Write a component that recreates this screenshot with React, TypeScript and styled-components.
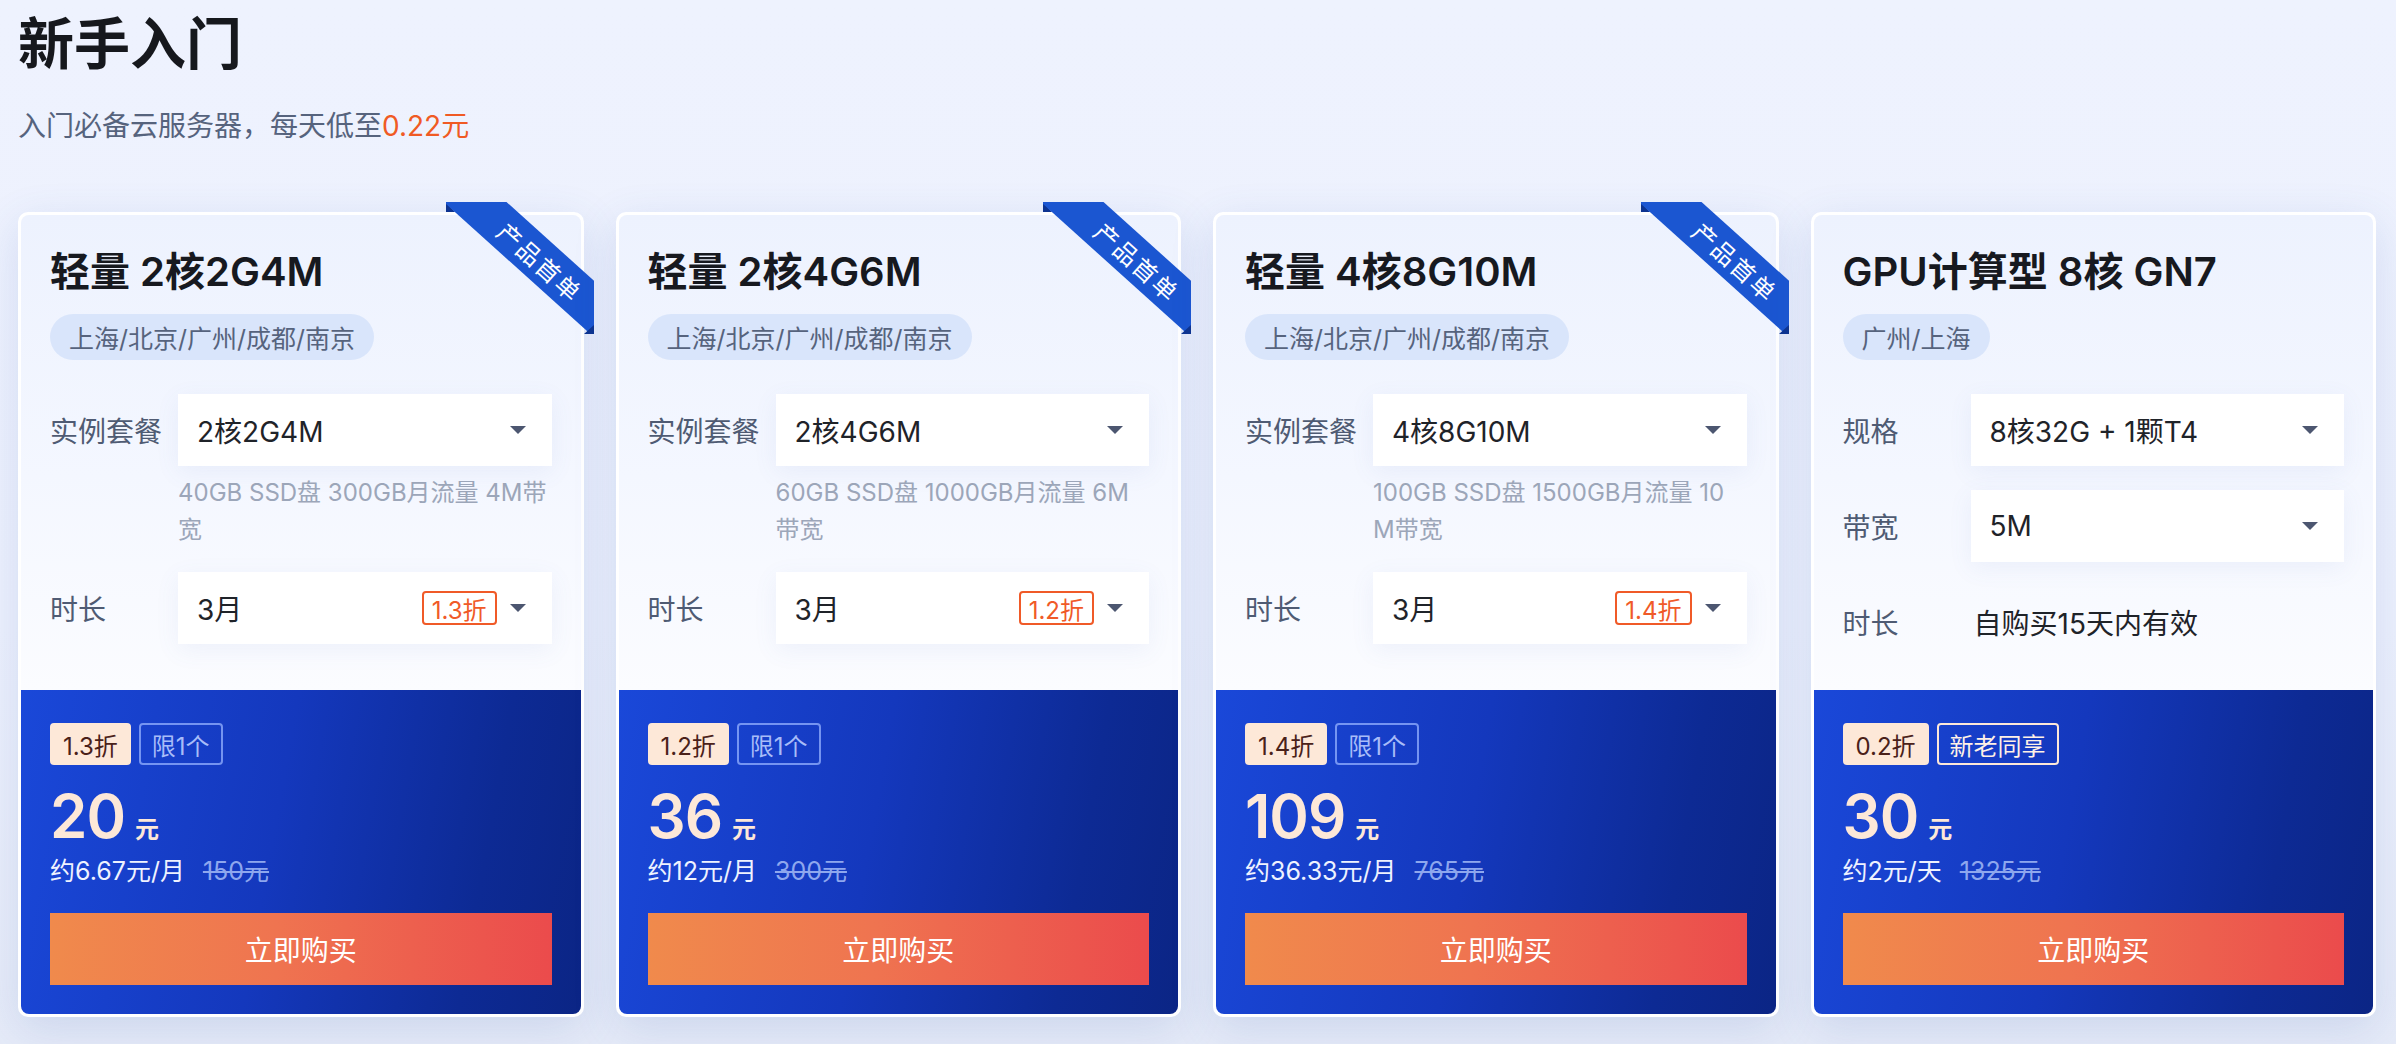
import styled, { createGlobalStyle } from 'styled-components'

// DATA

interface Row {
	label: string
	value?: string
	discount?: string
	desc?: string[]
	text?: string
}

interface Plan {
	title: string
	regions: string
	ribbon: boolean
	rows: Row[]
	tag: string
	limit: string
	limitHot?: boolean
	price: string
	per: string
	orig: string
}

const plans: Plan[] = [
	{
		title: '轻量 2核2G4M',
		regions: '上海/北京/广州/成都/南京',
		ribbon: true,
		rows: [
			{ label: '实例套餐', value: '2核2G4M', desc: ['40GB SSD盘 300GB月流量 4M带', '宽'] },
			{ label: '时长', value: '3月', discount: '1.3折' },
		],
		tag: '1.3折',
		limit: '限1个',
		price: '20',
		per: '约6.67元/月',
		orig: '150元',
	},
	{
		title: '轻量 2核4G6M',
		regions: '上海/北京/广州/成都/南京',
		ribbon: true,
		rows: [
			{ label: '实例套餐', value: '2核4G6M', desc: ['60GB SSD盘 1000GB月流量 6M', '带宽'] },
			{ label: '时长', value: '3月', discount: '1.2折' },
		],
		tag: '1.2折',
		limit: '限1个',
		price: '36',
		per: '约12元/月',
		orig: '300元',
	},
	{
		title: '轻量 4核8G10M',
		regions: '上海/北京/广州/成都/南京',
		ribbon: true,
		rows: [
			{ label: '实例套餐', value: '4核8G10M', desc: ['100GB SSD盘 1500GB月流量 10', 'M带宽'] },
			{ label: '时长', value: '3月', discount: '1.4折' },
		],
		tag: '1.4折',
		limit: '限1个',
		price: '109',
		per: '约36.33元/月',
		orig: '765元',
	},
	{
		title: 'GPU计算型 8核 GN7',
		regions: '广州/上海',
		ribbon: false,
		rows: [
			{ label: '规格', value: '8核32G + 1颗T4' },
			{ label: '带宽', value: '5M' },
			{ label: '时长', text: '自购买15天内有效' },
		],
		tag: '0.2折',
		limit: '新老同享',
		limitHot: true,
		price: '30',
		per: '约2元/天',
		orig: '1325元',
	},
]

// CSS

const GlobalStyle = createGlobalStyle`
	* {
		box-sizing: border-box;
	}

	body {
		margin: 0;
		background: linear-gradient(180deg, #eef2fe 0%, #edf1fd 60%, #e6ebf8 100%);
		font-family: Inter, "Noto Sans CJK SC", sans-serif;
		color: #1b1f2a;
	}
`

const Page = styled.div`
	width: 2396px;
	height: 1044px;
	padding: 8px 20px 0 18px;
	overflow: hidden;
`

const Heading = styled.h1`
	margin: 0;
	font-size: 56px;
	line-height: 72px;
	font-weight: 700;
	color: #16181d;
`

const Subtitle = styled.p`
	margin: 26px 0 0;
	font-size: 28px;
	line-height: 40px;
	color: #56637d;

	em {
		font-style: normal;
		color: #f05a24;
	}
`

const Grid = styled.div`
	margin-top: 66px;
	display: grid;
	grid-template-columns: repeat(4, 1fr);
	gap: 32px;
	align-items: stretch;
`

const Card = styled.div`
	position: relative;
	display: flex;
	flex-direction: column;
	border: 3px solid #ffffff;
	border-radius: 10px;
	box-shadow: 0 12px 44px rgba(64, 100, 180, 0.16);
	background: #ffffff;
`

const Top = styled.div`
	flex: 1;
	padding: 29px 29px 32px;
	border-radius: 8px 8px 0 0;
	background: linear-gradient(180deg, #edf2fe 0%, #f4f7ff 55%, #fbfcff 100%);
`

const Title = styled.h2`
	margin: 0;
	font-size: 40px;
	line-height: 56px;
	font-weight: 600;
	color: #17191f;
`

const Regions = styled.span`
	display: inline-flex;
	align-items: center;
	height: 46px;
	margin-top: 14px;
	padding: 0 19px;
	border-radius: 23px;
	background: #d9e5fb;
	font-size: 25px;
	color: #56637d;
`

const Rows = styled.div`
	margin-top: 34px;
	display: flex;
	flex-direction: column;
	gap: 24px;
`

const RowLine = styled.div`
	display: grid;
	grid-template-columns: 128px 1fr;
	align-items: start;
`

const Label = styled.div`
	height: 72px;
	display: flex;
	align-items: center;
	font-size: 28px;
	color: #4f5b73;
`

const Select = styled.div`
	height: 72px;
	display: flex;
	align-items: center;
	padding: 0 26px 0 19px;
	background: #ffffff;
	box-shadow: 0 6px 24px rgba(90, 120, 190, 0.08);
	font-size: 28px;
	color: #1f2329;

	span {
		flex: 1;
	}
`

const Arrow = styled.i`
	width: 0;
	height: 0;
	border-left: 8px solid transparent;
	border-right: 8px solid transparent;
	border-top: 8px solid #4c5670;
`

const Discount = styled.b`
	height: 34px;
	margin-right: 13px;
	padding: 0 8px;
	display: flex;
	align-items: center;
	border: 2px solid #f05a28;
	border-radius: 4px;
	font-size: 24px;
	font-weight: 400;
	color: #f05a28;
`

const Desc = styled.p`
	margin: 8px 0 0;
	font-size: 24px;
	line-height: 37px;
	color: #9ca6b9;

	span {
		display: block;
		white-space: nowrap;
	}
`

const PlainValue = styled.div`
	height: 72px;
	display: flex;
	align-items: center;
	padding-left: 3px;
	font-size: 28px;
	color: #1f2329;
`

const Bottom = styled.div`
	padding: 33px 29px 29px;
	border-radius: 0 0 8px 8px;
	background: linear-gradient(100deg, #1a48d9 0%, #1438bd 45%, #0d2a94 80%, #0b2585 100%);
`

const Tags = styled.div`
	display: flex;
	gap: 8px;
`

const Tag = styled.span<{ $outline?: boolean; $hot?: boolean }>`
	height: 42px;
	padding: 0 11px;
	display: flex;
	align-items: center;
	border-radius: 4px;
	font-size: 24px;
	border: 2px solid
		${(p) => (p.$outline ? (p.$hot ? '#fde8d8' : 'rgba(150, 178, 255, 0.75)') : '#fde8d8')};
	background: ${(p) => (p.$outline ? 'transparent' : '#fde8d8')};
	color: ${(p) => (p.$outline ? (p.$hot ? '#fff1e6' : '#a8bcf8') : '#4a2119')};
`

const Price = styled.div`
	margin-top: 16px;
	height: 70px;
	display: flex;
	align-items: baseline;
	color: #fde8d8;

	strong {
		font-size: 60px;
		line-height: 70px;
		font-weight: 600;
		letter-spacing: -1px;
	}

	small {
		margin-left: 10px;
		font-size: 24px;
		font-weight: 700;
	}
`

const Per = styled.div`
	height: 36px;
	display: flex;
	align-items: center;
	gap: 18px;
	font-size: 25px;
	color: #eef2ff;

	s {
		color: #8ea7ee;
	}
`

const BuyButton = styled.button`
	margin-top: 26px;
	width: 100%;
	height: 72px;
	border: none;
	background: linear-gradient(90deg, #f08a4c 0%, #ef7450 45%, #eb4b4c 100%);
	font-family: inherit;
	font-size: 28px;
	color: #ffffff;
	cursor: pointer;
`

const Ribbon = styled.div`
	position: absolute;
	top: -13px;
	right: -13px;
	width: 148px;
	height: 132px;
	overflow: hidden;
	pointer-events: none;

	&::before,
	&::after {
		content: '';
		position: absolute;
		width: 0;
		height: 0;
	}

	&::before {
		left: 0;
		top: 0;
		border-left: 9px solid #0d3390;
		border-top: 10px solid transparent;
	}

	&::after {
		right: 0;
		bottom: 0;
		border-right: 10px solid #0d3390;
		border-top: 9px solid transparent;
	}
`

const Band = styled.div`
	position: absolute;
	left: -32px;
	top: 32px;
	width: 240px;
	height: 42px;
	padding-left: 18px;
	display: flex;
	align-items: center;
	justify-content: center;
	background: #1b56d1;
	transform: rotate(42deg);
	font-size: 24px;
	letter-spacing: 2px;
	color: #ffffff;
`

// COMPONENT

const PlanCard: React.FC<{ plan: Plan }> = ({ plan }) => (
	<Card>
		{plan.ribbon && (
			<Ribbon>
				<Band>产品首单</Band>
			</Ribbon>
		)}
		<Top>
			<Title>{plan.title}</Title>
			<Regions>{plan.regions}</Regions>
			<Rows>
				{plan.rows.map((row) => (
					<RowLine key={row.label}>
						<Label>{row.label}</Label>
						<div>
							{row.text ? (
								<PlainValue>{row.text}</PlainValue>
							) : (
								<Select>
									<span>{row.value}</span>
									{row.discount && <Discount>{row.discount}</Discount>}
									<Arrow />
								</Select>
							)}
							{row.desc && (
								<Desc>
									{row.desc.map((line) => (
										<span key={line}>{line}</span>
									))}
								</Desc>
							)}
						</div>
					</RowLine>
				))}
			</Rows>
		</Top>
		<Bottom>
			<Tags>
				<Tag>{plan.tag}</Tag>
				<Tag $outline $hot={plan.limitHot}>
					{plan.limit}
				</Tag>
			</Tags>
			<Price>
				<strong>{plan.price}</strong>
				<small>元</small>
			</Price>
			<Per>
				<span>{plan.per}</span>
				<s>{plan.orig}</s>
			</Per>
			<BuyButton>立即购买</BuyButton>
		</Bottom>
	</Card>
)

export default function App() {
	return (
		<>
			<GlobalStyle />
			<Page>
				<Heading>新手入门</Heading>
				<Subtitle>
					入门必备云服务器，每天低至<em>0.22元</em>
				</Subtitle>
				<Grid>
					{plans.map((plan) => (
						<PlanCard key={plan.title} plan={plan} />
					))}
				</Grid>
			</Page>
		</>
	)
}
